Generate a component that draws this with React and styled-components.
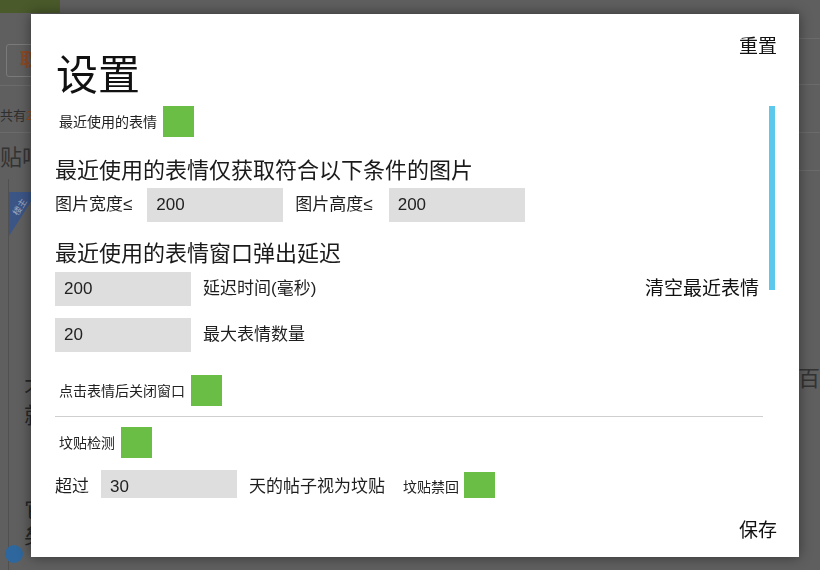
import React from "react";
import styled, { createGlobalStyle } from "styled-components";

const GlobalStyles = createGlobalStyle`
  html, body {
    margin: 0;
    padding: 0;
  }
  body {
    width: 820px;
    height: 570px;
    overflow: hidden;
    background: #5f5f5f;
    font-family: "Liberation Sans", "Noto Sans CJK SC", sans-serif;
  }
`;

const App = () => {
  return (
    <>
      <GlobalStyles />
      <Backdrop>
        <LeftStrip>
          <GreenTab />
          <OldButton>取</OldButton>
          <Rule $top={8} />
          <Count>
            共有<Hot>2</Hot>
          </Count>
          <Rule $top={6} />
          <ForumName>贴吧</ForumName>
          <Post>
            <svg width="23" height="44" viewBox="0 0 23 44">
              <polygon points="0,0 23,0 23,8 0,44" fill="#3b5586" />
              <text x="3" y="22" fontSize="9" fill="#9aa6bf" transform="rotate(-58 8 18)">
                楼主
              </text>
            </svg>
            <PostText $top={137}>不</PostText>
            <PostText $top={0}>就</PostText>
            <PostText $top={68}>它</PostText>
            <PostText $top={0}>矣</PostText>
          </Post>
        </LeftStrip>
        <RightStrip>
          <Rule $top={38} />
          <Rule $top={45} />
          <Rule $top={47} />
          <Rule $top={37} />
          <ForumName $top={193}>百</ForumName>
        </RightStrip>
      </Backdrop>
      <FloatDot />

      <Modal>
        <Header>
          <Title>设置</Title>
          <TextButton>重置</TextButton>
        </Header>

        <ScrollArea>
          <Thumb />
          <Content>
            <ToggleRow>
              <SmallLabel>最近使用的表情</SmallLabel>
              <Switch aria-label="最近使用的表情" />
            </ToggleRow>

            <SectionTitle>最近使用的表情仅获取符合以下条件的图片</SectionTitle>
            <FieldRow $top={2}>
              <FieldLabel $pad={3}>图片宽度≤</FieldLabel>
              <NumberInput defaultValue="200" />
              <FieldLabel $pad={4}>图片高度≤</FieldLabel>
              <NumberInput defaultValue="200" />
            </FieldRow>

            <SectionTitle $top={17}>最近使用的表情窗口弹出延迟</SectionTitle>
            <FieldRow $top={3}>
              <NumberInput defaultValue="200" />
              <FieldLabel>延迟时间(毫秒)</FieldLabel>
              <ClearButton>清空最近表情</ClearButton>
            </FieldRow>
            <FieldRow $top={12}>
              <NumberInput defaultValue="20" />
              <FieldLabel>最大表情数量</FieldLabel>
            </FieldRow>

            <ToggleRow $top={23}>
              <SmallLabel>点击表情后关闭窗口</SmallLabel>
              <Switch aria-label="点击表情后关闭窗口" />
            </ToggleRow>

            <Divider />

            <ToggleRow $top={10}>
              <SmallLabel>坟贴检测</SmallLabel>
              <Switch aria-label="坟贴检测" />
            </ToggleRow>
            <FieldRow $top={12}>
              <FieldLabel>超过</FieldLabel>
              <NumberInput defaultValue="30" />
              <FieldLabel>天的帖子视为坟贴</FieldLabel>
              <ToggleRow $inline>
                <SmallLabel>坟贴禁回</SmallLabel>
                <Switch aria-label="坟贴禁回" />
              </ToggleRow>
            </FieldRow>
          </Content>
        </ScrollArea>

        <Footer>
          <TextButton>保存</TextButton>
        </Footer>
      </Modal>
    </>
  );
};

/* dimmed page behind the dialog */

const Backdrop = styled.div`
  width: 820px;
  height: 570px;
  display: flex;
  justify-content: space-between;
  overflow: hidden;
  background: #5f5f5f;
`;

const LeftStrip = styled.div`
  width: 31px;
  display: flex;
  flex-direction: column;
`;

const RightStrip = styled.div`
  width: 22px;
  display: flex;
  flex-direction: column;
`;

const GreenTab = styled.div`
  width: 60px;
  height: 13px;
  background: #4a5a2a;
`;

const OldButton = styled.div`
  margin: 31px 0 0 6px;
  width: 60px;
  height: 33px;
  box-sizing: border-box;
  border: 1px solid #7a7a7a;
  border-radius: 3px;
  padding-left: 13px;
  font-size: 18px;
  font-weight: 700;
  line-height: 31px;
  color: #8c4a26;
  white-space: nowrap;
`;

const Rule = styled.div`
  margin-top: ${(p) => p.$top}px;
  width: 100%;
  height: 1px;
  background: #6b6b6b;
`;

const Count = styled.div`
  margin: 20px 0 0 0;
  font-size: 13px;
  line-height: 20px;
  color: #2e2e2e;
  white-space: nowrap;
`;

const Hot = styled.span`
  color: #9a4a1c;
`;

const ForumName = styled.div`
  margin: ${(p) => p.$top || 10}px 0 0 0;
  font-size: 22px;
  line-height: 30px;
  color: #333;
  white-space: nowrap;
`;

const Post = styled.div`
  margin: 6px 0 0 8px;
  flex: 1;
  border-left: 1px solid #505050;
  padding-top: 13px;
`;

const PostText = styled.div`
  margin: ${(p) => p.$top}px 0 0 15px;
  font-size: 22px;
  line-height: 26px;
  color: #262626;
`;

const FloatDot = styled.div`
  position: fixed;
  left: 5px;
  top: 545px;
  width: 18px;
  height: 18px;
  border-radius: 50%;
  background: #2d679d;
`;

/* dialog */

const Modal = styled.div`
  position: fixed;
  left: 31px;
  top: 14px;
  width: 768px;
  height: 543px;
  box-sizing: border-box;
  padding: 21px 22px 14px 24px;
  display: flex;
  flex-direction: column;
  background: #fff;
  box-shadow: 0 0 12px rgba(0, 0, 0, 0.45);
  color: #1a1a1a;
`;

const Header = styled.div`
  display: flex;
  justify-content: space-between;
  align-items: flex-start;
`;

const Title = styled.h1`
  margin: 17px 0 0 1px;
  font-size: 42px;
  line-height: 48px;
  font-weight: 400;
  color: #111;
`;

const TextButton = styled.button`
  padding: 0;
  border: 0;
  background: none;
  font-family: inherit;
  font-size: 19px;
  line-height: 24px;
  color: #111;
  cursor: pointer;
`;

const ScrollArea = styled.div`
  position: relative;
  margin-top: 6px;
  height: 392px;
  overflow: hidden;
`;

const Thumb = styled.div`
  position: absolute;
  top: 0;
  right: 2px;
  width: 6px;
  height: 184px;
  background: #5bc8ec;
`;

const Content = styled.div`
  padding-right: 14px;
`;

const ToggleRow = styled.div`
  display: flex;
  align-items: center;
  gap: ${(p) => (p.$inline ? 5 : 6)}px;
  margin-top: ${(p) => p.$top || 0}px;
  padding-left: ${(p) => (p.$inline ? 0 : 4)}px;
  margin-left: ${(p) => (p.$inline ? 6 : 0)}px;
`;

const SmallLabel = styled.span`
  font-size: 14px;
  line-height: 20px;
  color: #222;
`;

const Switch = styled.button`
  width: 31px;
  height: 31px;
  padding: 0;
  border: 0;
  background: #6abd45;
  cursor: pointer;
`;

const SectionTitle = styled.h2`
  margin: ${(p) => p.$top || 19}px 0 0 0;
  font-size: 22px;
  line-height: 30px;
  font-weight: 400;
  color: #1a1a1a;
`;

const FieldRow = styled.div`
  display: flex;
  align-items: center;
  gap: 12px;
  margin-top: ${(p) => p.$top || 0}px;
`;

const FieldLabel = styled.span`
  font-size: 17px;
  line-height: 24px;
  color: #1e1e1e;
  white-space: nowrap;
  padding-right: ${(p) => p.$pad || 0}px;
`;

const NumberInput = styled.input`
  width: 136px;
  height: 34px;
  box-sizing: border-box;
  padding: 0 9px;
  border: 0;
  outline: none;
  background: #dedede;
  font-family: inherit;
  font-size: 17px;
  color: #222;
`;

const ClearButton = styled(TextButton)`
  margin-left: auto;
  margin-right: 4px;
`;

const Divider = styled.div`
  margin-top: 10px;
  height: 1px;
  background: #cfcfcf;
`;

const Footer = styled.div`
  margin-top: 21px;
  display: flex;
  justify-content: flex-end;
`;

export default App;
